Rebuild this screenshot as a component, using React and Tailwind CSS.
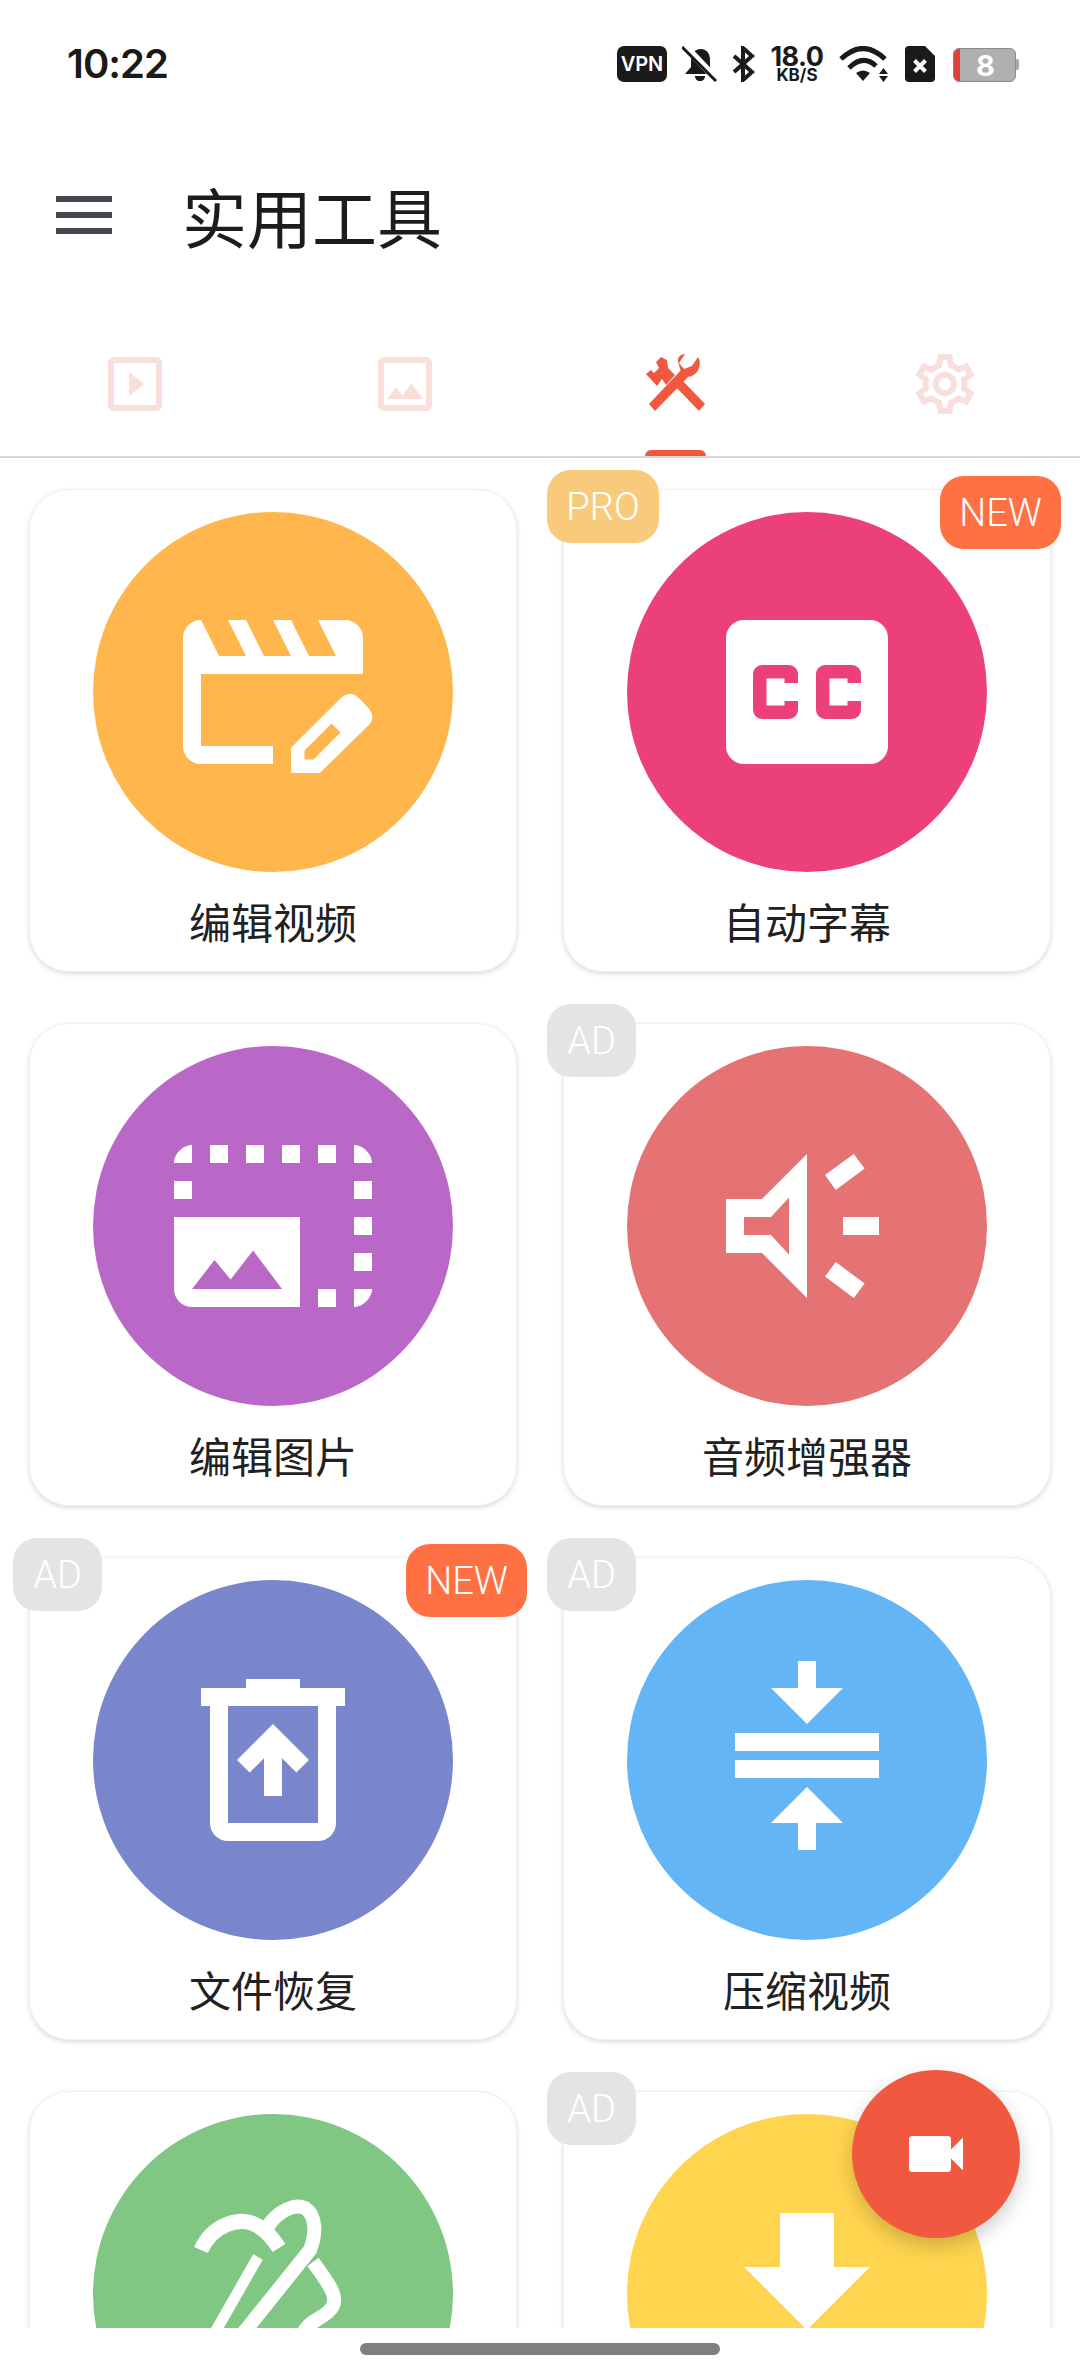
import React from "react";
import { MdOutlineSettings, MdOutlineSlideshow, MdOutlineImage, MdVideocam } from "react-icons/md";

const Fill = ({ children }) => (
  <svg viewBox="0 0 24 24" fill="#fff" fillRule="evenodd" className="w-[216px] h-[216px]">{children}</svg>
);

const icons = {
  edit: (
    <Fill>
      <path d="M4 4L6 8H9L7 4H9L11 8H14L12 4H14L16 8H19L17 4H20A2 2 0 0 1 22 6V10H4V18H12V20H4A2 2 0 0 1 2 18V6A2 2 0 0 1 4 4Z" />
      <path d="M14 21V18.2L19.6 12.6Q20.6 11.8 21.5 12.6L22.7 13.9Q23.4 14.8 22.7 15.6L17.2 21ZM15.5 19.5H16.5L19.5 16.5L18.5 15.5L15.5 18.5Z" />
    </Fill>
  ),
  cc: (
    <Fill>
      <path d="M5 4H19A2 2 0 0 1 21 6V18A2 2 0 0 1 19 20H5A2 2 0 0 1 3 18V6A2 2 0 0 1 5 4ZM7 9A1 1 0 0 0 6 10V14A1 1 0 0 0 7 15H10A1 1 0 0 0 11 14V13H9.5V13.5H7.5V10.5H9.5V11H11V10A1 1 0 0 0 10 9ZM14 9A1 1 0 0 0 13 10V14A1 1 0 0 0 14 15H17A1 1 0 0 0 18 14V13H16.5V13.5H14.5V10.5H16.5V11H18V10A1 1 0 0 0 17 9Z" />
    </Fill>
  ),
  photo: (
    <Fill>
      <path d="M21 15h2v2h-2v-2zm0-4h2v2h-2v-2zm2 8h-2v2c1 0 2-1 2-2zM13 3h2v2h-2V3zm8 4h2v2h-2V7zm0-4v2h2c0-1-1-2-2-2zM1 7h2v2H1V7zm16-4h2v2h-2V3zm0 16h2v2h-2v-2zM3 3C2 3 1 4 1 5h2V3zm6 0h2v2H9V3zM5 3h2v2H5V3zm-4 8v8c0 1.1.9 2 2 2h12V11H1zm2 8l2.5-3.21 1.79 2.15 2.5-3.22L13 19H3z" />
    </Fill>
  ),
  audio: (
    <Fill>
      <path d="M3 9H7L12 4V20L7 15H3ZM5 11V13H8L10 15.17V8.83L8 11Z" />
      <path d="M16 11H20V13H16Z" />
      <path d="M14 6.33L17.2 4L18.4 5.6L15.2 8Z" />
      <path d="M15.2 16L18.4 18.4L17.2 20L14 17.6Z" />
    </Fill>
  ),
  trash: (
    <Fill>
      <path d="M9 3H15V4H20V6H19V19A2 2 0 0 1 17 21H7A2 2 0 0 1 5 19V6H4V4H9ZM7 6V19H17V6Z" />
      <path d="M12 8L16 12L14.6 13.4L13 11.8V16H11V11.8L9.4 13.4L8 12Z" />
    </Fill>
  ),
  compress: (
    <Fill>
      <path d="M11 1H13V4H16L12 8L8 4H11Z" />
      <path d="M4 9H20V11H4ZM4 12H20V14H4Z" />
      <path d="M12 15L16 19H13V22H11V19H8Z" />
    </Fill>
  ),
  swirl: (
    <svg viewBox="0 0 216 216" fill="none" stroke="#fff" className="w-[216px] h-[216px] overflow-visible">
      <path strokeWidth="15" d="M36 64C47 39 75 29 93 40C103 46 109 54 114 62" />
      <path strokeWidth="14" d="M103 40C113 25 130 17 140 22C152 30 151 49 145 64L76 150" />
      <path strokeWidth="11" d="M93 71L45 155" />
      <path strokeWidth="14" d="M148 76C165 99 177 114 163 126C151 136 143 136 138 148" />
    </svg>
  ),
  download: (
    <Fill>
      <path d="M19 9h-4V3H9v6H5l7 7 7-7z" />
    </Fill>
  ),
};

const cards = [
  { label: "编辑视频", icon: "edit", bg: "bg-[#ffb74d]" },
  { label: "自动字幕", icon: "cc", bg: "bg-[#ec407a]", pro: true, isNew: true },
  { label: "编辑图片", icon: "photo", bg: "bg-[#ba68c8]" },
  { label: "音频增强器", icon: "audio", bg: "bg-[#e57373]", ad: true },
  { label: "文件恢复", icon: "trash", bg: "bg-[#7986cb]", ad: true, isNew: true },
  { label: "压缩视频", icon: "compress", bg: "bg-[#64b5f6]", ad: true },
  { label: "", icon: "swirl", bg: "bg-[#81c784]" },
  { label: "", icon: "download", bg: "bg-[#ffd54f]", ad: true },
];

const badgeText = "font-['Roboto',sans-serif] text-[38px] font-light pt-[2px] box-border text-white flex items-center justify-center absolute h-[73px]";

function Card({ c }) {
  return (
    <div className="relative h-[483px] rounded-[40px] bg-white border border-[#f0f0f0] shadow-[0_2px_5px_rgba(0,0,0,0.14)] flex flex-col items-center box-border">
      <div className={`mt-[22px] w-[360px] h-[360px] shrink-0 rounded-full flex items-center justify-center ${c.bg}`}>
        {icons[c.icon]}
      </div>
      <div className="flex-1 flex items-center justify-center pb-[2px] box-border font-['Noto_Sans_CJK_SC',sans-serif] text-[42px] text-[#212121] leading-none">
        {c.label}
      </div>
      {c.pro && <div className={`${badgeText} -left-[17px] -top-[20px] w-[112px] rounded-[24px] bg-[#f8cb7c]`}>PRO</div>}
      {c.ad && <div className={`${badgeText} -left-[17px] -top-[20px] w-[89px] rounded-[24px] bg-[#e4e4e4]`}>AD</div>}
      {c.isNew && <div className={`${badgeText} -right-[11px] -top-[14px] w-[121px] rounded-[24px] bg-[#ff7043]`}>NEW</div>}
    </div>
  );
}

function StatusIcons() {
  return (
    <div className="flex items-start gap-[15px] font-['Inter',sans-serif] text-[#1a1a1a]">
      <div className="w-[50px] h-[36px] rounded-[7px] bg-[#1a1a1a] text-white text-[20px] font-semibold flex items-center justify-center leading-none">VPN</div>
      <svg viewBox="0 0 35 36" className="w-[35px] h-[36px]">
        <path fill="#1a1a1a" d="M19 3C12 3 9 8 9 14V21L3 28H32L28 21V14C28 8 25 3 19 3Z" />
        <path fill="#1a1a1a" d="M13 30H23C23 33 21 35 18 35C15 35 13 33 13 30Z" />
        <path stroke="#fff" strokeWidth="7" d="M2 -1L36 35" />
        <path stroke="#1a1a1a" strokeWidth="3" d="M0 1L34 35" />
      </svg>
      <svg viewBox="0 0 23 36" className="w-[23px] h-[36px]" fill="none" stroke="#1a1a1a" strokeWidth="4">
        <path d="M2 10L20 26L11 34V2L20 10L2 26" />
      </svg>
      <div className="w-[54px] h-[36px] flex flex-col items-center font-bold">
        <span className="text-[27px] leading-[21px] tracking-[-0.5px]">18.0</span>
        <span className="text-[17px] leading-[14px] mt-[1px]">KB/S</span>
      </div>
      <svg viewBox="0 0 49 36" className="w-[49px] h-[36px]" fill="none">
        <path stroke="#1a1a1a" strokeWidth="5" d="M2 13Q24 -8 46 13" />
        <path stroke="#1a1a1a" strokeWidth="5" d="M10 22Q24 8 37 20" />
        <path fill="#1a1a1a" d="M17 27Q24 22 31 27L24 35ZM40 28L44.5 22L49 28ZM40 30H49L44.5 36Z" />
      </svg>
      <svg viewBox="0 0 30 36" className="w-[30px] h-[36px] ml-[2px]">
        <path fill="#1a1a1a" d="M4 0H20L30 10V32A4 4 0 0 1 26 36H4A4 4 0 0 1 0 32V4A4 4 0 0 1 4 0Z" />
        <path stroke="#fff" strokeWidth="4" d="M9.5 14.5L20.5 25.5M20.5 14.5L9.5 25.5" />
      </svg>
      <div className="relative w-[66px] h-[34px] mt-[2px] ml-[3px]">
        <div className="w-[63px] h-[34px] rounded-[6px] bg-[#b0b0b0] border border-[#8c8c8c] overflow-hidden flex box-border">
          <div className="w-[6px] h-full bg-[#e0403a]" />
          <div className="flex-1 flex items-center justify-center text-white text-[29px] font-bold leading-none pr-[4px]">8</div>
        </div>
        <div className="absolute right-0 top-[11px] w-[3px] h-[11px] rounded-r-[2px] bg-[#a8a8a8]" />
      </div>
    </div>
  );
}

function ToolsIcon() {
  return (
    <svg viewBox="0 0 72 72" className="w-[72px] h-[72px]" fill="#f0583f">
      <path d="M10 56L44 20L51 27L16 63Z" />
      <path d="M66 56L60 63L36 38L42 31Z" />
      <path d="M39 14C38 9 42 6 46 6L40 15L45 21L53 18L59 9C62 13 61 20 58 24C54 29 48 30 43 27Z" />
      <path d="M22 9L28 12L29 20L36 27L27 37L23 31L18 38L7 26L12 22L15 25L20 20L17 14Z" />
    </svg>
  );
}

export default function App() {
  return (
    <div className="relative w-[1080px] h-[2376px] bg-white overflow-hidden flex flex-col">
      <div className="h-[128px] shrink-0 pt-[46px] pl-[67px] pr-[61px] flex justify-between items-start">
        <span className="font-['Inter',sans-serif] text-[40px] font-semibold tracking-[-1px] text-[#1a1a1a] leading-[36px]">10:22</span>
        <StatusIcons />
      </div>

      <div className="h-[174px] shrink-0 pl-[56px] flex items-center">
        <div className="w-[56px] h-[38px] flex flex-col justify-between">
          <div className="h-[6px] bg-[#49454f]" />
          <div className="h-[6px] bg-[#49454f]" />
          <div className="h-[6px] bg-[#49454f]" />
        </div>
        <div className="ml-[70px] font-['Noto_Sans_CJK_SC',sans-serif] text-[65px] leading-none text-[#1c1b1f]">实用工具</div>
      </div>

      <div className="h-[156px] shrink-0 grid grid-cols-4 border-b-2 border-[#d8d8d8] box-border">
        <div className="flex justify-center pt-[46px]"><MdOutlineSlideshow className="w-[72px] h-[72px] text-[#f9dfda]" /></div>
        <div className="flex justify-center pt-[46px]"><MdOutlineImage className="w-[72px] h-[72px] text-[#f9dfda]" /></div>
        <div className="flex flex-col items-center pt-[46px]">
          <ToolsIcon />
          <div className="mt-auto w-[61px] h-[6px] rounded-t-[6px] bg-[#f0583f]" />
        </div>
        <div className="flex justify-center pt-[46px]"><MdOutlineSettings className="w-[72px] h-[72px] text-[#f9dfda]" /></div>
      </div>

      <div className="flex-1 overflow-hidden">
        <div className="grid grid-cols-2 gap-x-[46px] gap-y-[51px] px-[29px] pt-[31px]">
          {cards.map((c, i) => <Card key={i} c={c} />)}
        </div>
      </div>

      <div className="h-[48px] shrink-0 flex justify-center pt-[15px]">
        <div className="w-[360px] h-[12px] rounded-full bg-[#7f7f7f]" />
      </div>

      <div className="absolute left-[852px] top-[2070px] w-[168px] h-[168px] rounded-full bg-[#f0583f] shadow-[0_8px_20px_rgba(0,0,0,0.2)] flex items-center justify-center">
        <MdVideocam className="w-[72px] h-[72px] text-white" />
      </div>
    </div>
  );
}
